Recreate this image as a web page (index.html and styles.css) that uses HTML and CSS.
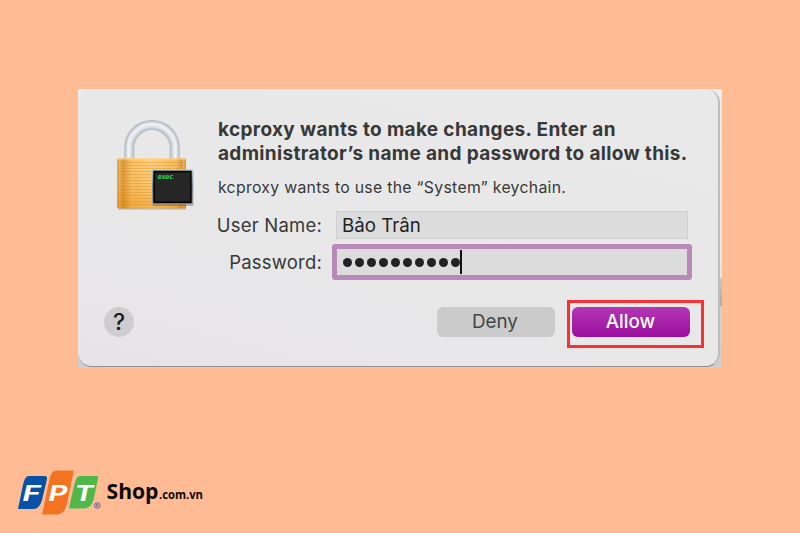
FILE: index.html
```html
<!DOCTYPE html>
<html lang="vi">
<head>
  <meta charset="UTF-8">
  <title>FPT Shop - Keychain</title>
  <link rel="stylesheet" href="styles.css">
</head>
<body>
  <div class="backdrop">
    <div class="dialog">
      <div class="top">
        <svg class="lock" width="82" height="96" viewBox="114 117 82 96">
          <defs>
            <linearGradient id="gold" x1="0" x2="1" y1="0" y2="0">
              <stop offset="0" stop-color="#c67c18"/>
              <stop offset=".03" stop-color="#f0ac4c"/>
              <stop offset=".08" stop-color="#d58a20"/>
              <stop offset=".2" stop-color="#f8b650"/>
              <stop offset=".5" stop-color="#ffc76c"/>
              <stop offset=".85" stop-color="#f8b24a"/>
              <stop offset=".94" stop-color="#d68b22"/>
              <stop offset=".97" stop-color="#f0ac4c"/>
              <stop offset="1" stop-color="#c67c18"/>
            </linearGradient>
            <linearGradient id="shade" x1="0" x2="0" y1="0" y2="1">
              <stop offset="0" stop-color="#fff" stop-opacity=".12"/>
              <stop offset="1" stop-color="#e08a10" stop-opacity=".35"/>
            </linearGradient>
            <pattern id="lines" width="4" height="3" patternUnits="userSpaceOnUse">
              <rect width="4" height="1" fill="#c87c10" opacity=".28"/>
            </pattern>
            <linearGradient id="frame" x1="0" x2="0" y1="0" y2="1">
              <stop offset="0" stop-color="#b4cbd2"/>
              <stop offset=".5" stop-color="#788386"/>
              <stop offset="1" stop-color="#9a9c9c"/>
            </linearGradient>
          </defs>
          <g fill="none">
            <path d="M129.3 160v-12.3a22.7 22.7 0 0 1 45.4 0v12.3" stroke="#adb2b8" stroke-width="10"/>
            <path d="M129.3 160v-12.3a22.7 22.7 0 0 1 45.4 0v12.3" stroke="#c6ccd3" stroke-width="8.5"/>
            <path d="M129 160v-12.3a23 23 0 0 1 46 0v12.3" stroke="#dfe4ea" stroke-width="5"/>
            <path d="M128.5 160v-12.3a23.5 23.5 0 0 1 47 0v12.3" stroke="#eef1f5" stroke-width="2"/>
          </g>
          <rect x="118" y="207" width="68" height="2.5" rx="1" fill="#a79b8c" opacity=".7"/>
          <rect x="117.3" y="158.5" width="68.7" height="49.7" rx="1.5" fill="url(#gold)"/>
          <rect x="117.3" y="158.5" width="68.7" height="49.7" rx="1.5" fill="url(#shade)"/>
          <rect x="118" y="161" width="67" height="45" fill="url(#lines)"/>
          <rect x="118" y="158.5" width="67" height="1" fill="#ffd588"/>
          <rect x="152.5" y="171" width="41" height="35" rx="1" fill="#000" opacity=".22"/>
          <rect x="152" y="169.3" width="41" height="35.2" rx="1" fill="url(#frame)"/>
          <rect x="153.3" y="170.7" width="38.4" height="32.5" fill="#050505"/>
          <rect x="155" y="172.5" width="35" height="29" fill="#262626"/>
          <text x="157.5" y="179" class="exec" textLength="16">exec</text>
        </svg>
        <div class="content">
          <h1>
            <span>kcproxy wants to make changes. Enter an</span>
            <span>administrator’s name and password to allow this.</span>
          </h1>
          <p class="message">kcproxy wants to use the “System” keychain.</p>
          <div class="form">
            <label>User Name:</label>
            <div class="field">Bảo Trân</div>
            <label>Password:</label>
            <div class="field focused">
              <span class="dots"><i></i><i></i><i></i><i></i><i></i><i></i><i></i><i></i><i></i><i></i></span>
              <span class="caret"></span>
            </div>
          </div>
        </div>
      </div>
      <div class="actions">
        <div class="help">?</div>
        <div class="button deny">Deny</div>
        <div class="highlight">
          <div class="button allow">Allow</div>
        </div>
      </div>
    </div>
  </div>
  <svg class="logo" width="200" height="50" viewBox="16 468 200 50">
    <path d="M28.5 476h16q3 0 2.5 3l-5 21q-2.5 9-9 9H18l5-24q2-9 5.5-9z" fill="#0751a6"/>
    <path d="M80 476h18.5l-5 24q-2.5 8.5-9.5 8.5H69l5-23q2-9.5 6-9.5z" fill="#50b848"/>
    <path d="M57 470h17.5l-7.5 35.5q-2.5 9.5-10.5 9.5H41.5l7.5-36q2-9 8-9z" fill="#f47321" stroke="#ffbd96" stroke-width="1"/>
    <text class="fpt" x="22.5" y="500.5" textLength="18" lengthAdjust="spacingAndGlyphs">F</text>
    <text class="fpt" x="48.5" y="500.5" textLength="19" lengthAdjust="spacingAndGlyphs">P</text>
    <text class="fpt" x="74.5" y="500.5" textLength="19" lengthAdjust="spacingAndGlyphs">T</text>
    <circle cx="97.3" cy="505.5" r="2.8" fill="none" stroke="#4b5e9d" stroke-width="1"/>
    <text class="reg" x="95.8" y="507">R</text>
    <text class="shop" x="106.5" y="499" textLength="52" lengthAdjust="spacingAndGlyphs">Shop</text>
    <text class="domain" x="159" y="499" textLength="44" lengthAdjust="spacingAndGlyphs">.com.vn</text>
  </svg>
</body>
</html>
```
FILE: styles.css
```css
* { box-sizing: border-box; }
body {
  margin: 0;
  width: 800px;
  height: 533px;
  padding: 89px 0 0 78px;
  background: #ffbc94;
  font-family: Inter, "Liberation Sans", sans-serif;
  color: #383838;
  overflow: hidden;
}
.backdrop {
  width: 644px;
  height: 279px;
  background: linear-gradient(#ededed 0, #e4e4e4 188px, #c8c8c8 190px, #aaa 216px, #d0d0d0 218px, #cfcfcf);
}
.dialog {
  width: 642px;
  height: 278px;
  padding: 28px 0 0 36px;
  border-radius: 14px;
  border-right: 2px solid #bdbdbd;
  border-bottom: 1px solid #909090;
  background: linear-gradient(15deg, #e7e4e8 0%, #e8e8e8 45%, #e9e9e9 100%);
}
.top {
  display: flex;
  height: 178px;
}
.lock { flex: none; }
.exec {
  font: bold 7px "DejaVu Sans Mono", monospace;
  fill: #35d45a;
}
.content { padding: 1px 0 0 22px; }
h1 {
  margin: 0;
  font-size: 19px;
  line-height: 24px;
  font-weight: 700;
  letter-spacing: 0.34px;
  white-space: nowrap;
}
h1 span { display: block; }
.message {
  margin: 10px 0 0;
  font-size: 15.8px;
  line-height: 23px;
  letter-spacing: 0.3px;
  white-space: nowrap;
}
.form {
  display: grid;
  grid-template-columns: 104px 352px;
  grid-template-rows: 28px 28px;
  gap: 9px 14px;
  margin-top: 12px;
}
label {
  justify-self: end;
  font-size: 18.5px;
  line-height: 28px;
  letter-spacing: 0.2px;
  white-space: nowrap;
}
.field {
  display: flex;
  align-items: center;
  padding-left: 5px;
  background: #dcdcdc;
  border: 1px solid #d1d1d1;
  font-size: 18.7px;
  color: #222;
}
.focused {
  border-color: #b989b9;
  border-radius: 1px;
  box-shadow: 0 0 0 4px #b989b9;
  padding-left: 6px;
}
.dots { display: flex; gap: 3px; }
.dots i {
  width: 9px;
  height: 9px;
  border-radius: 50%;
  background: #222;
}
.caret {
  width: 2px;
  height: 24px;
  background: #111;
}
.actions {
  display: flex;
  align-items: center;
  height: 54px;
  margin-left: -10px;
}
.help {
  width: 30px;
  height: 30px;
  border-radius: 50%;
  background: #cfcbd0;
  color: #1c1c1c;
  font-size: 23px;
  font-weight: 500;
  line-height: 31px;
  text-align: center;
}
.button {
  height: 30px;
  border-radius: 6px;
  font-size: 18.8px;
  line-height: 29px;
  text-align: center;
}
.deny {
  width: 118px;
  margin-left: 303px;
  padding-right: 2px;
  background: #cbcbcb;
  color: #444;
}
.highlight {
  width: 137px;
  height: 48px;
  margin: 3px 0 0 12px;
  padding: 4px 2px;
  border: 3px solid #fb3033;
}
.allow {
  width: 118px;
  padding-right: 1px;
  background: linear-gradient(#b438b4, #9b0d9e);
  color: #fff;
  font-weight: 500;
}
.logo {
  display: block;
  margin: 100px 0 0 -62px;
}
.fpt {
  font: italic bold 21px Inter, sans-serif;
  fill: #fff;
}
.reg {
  font: bold 4px "Open Sans", sans-serif;
  fill: #4b5e9d;
}
.shop {
  font: bold 22px "Open Sans", sans-serif;
  fill: #0c0806;
}
.domain {
  font: bold 13px "Open Sans", sans-serif;
  fill: #0c0806;
}
```
